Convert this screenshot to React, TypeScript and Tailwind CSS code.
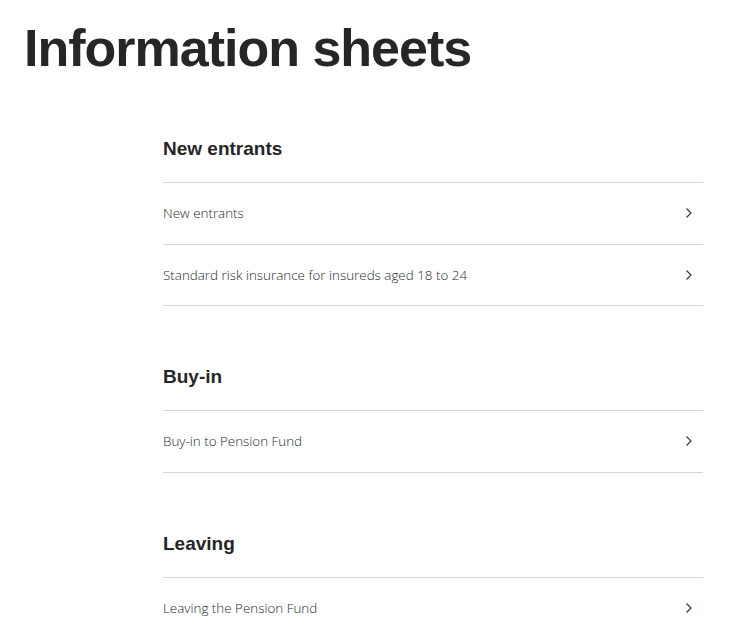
import React from "react";

const sections = [
  { title: "New entrants", items: ["New entrants", "Standard risk insurance for insureds aged 18 to 24"] },
  { title: "Buy-in", items: ["Buy-in to Pension Fund"] },
  { title: "Leaving", items: ["Leaving the Pension Fund"] },
];

function Chevron() {
  return (
    <svg width="8" height="12" viewBox="0 0 8 12" fill="none" className="shrink-0">
      <path d="M1.5 1.5 L6 6 L1.5 10.5" stroke="#2f3d3d" strokeWidth="1.2" />
    </svg>
  );
}

export default function App() {
  return (
    <div className="min-h-screen bg-white text-[#2a2a2a]" style={{ fontFamily: '"Liberation Sans", Arial, sans-serif' }}>
      <h1 className="pl-[24px] pt-[20px] text-[52px] font-bold leading-[56px] tracking-[-1px] text-[#262626]">
        Information sheets
      </h1>
      <div className="ml-[163px] w-[540px] pt-[62px]">
        {sections.map((s, i) => (
          <section key={s.title} className={i > 0 ? "mt-[60px]" : ""}>
            <h2 className="pb-[22px] text-[19px] font-bold leading-[22px] text-[#262626]">{s.title}</h2>
            <div className="border-t border-[#d4d4d4]">
              {s.items.map((it) => (
                <a
                  key={it}
                  className="flex h-[61.5px] items-center justify-between border-b border-[#d4d4d4] pr-[10px] text-[13.4px] text-[#1c2c2c]"
                  style={{ fontFamily: '"Open Sans", sans-serif', fontWeight: 300 }}
                >
                  <span>{it}</span>
                  <Chevron />
                </a>
              ))}
            </div>
          </section>
        ))}
      </div>
    </div>
  );
}
